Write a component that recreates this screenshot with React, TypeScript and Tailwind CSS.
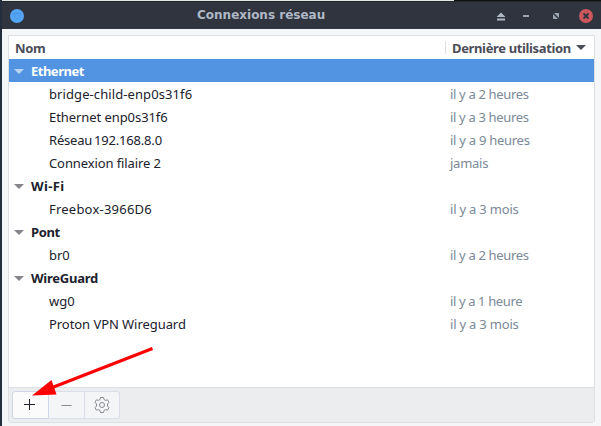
import React from "react";

type Row = { name: string; used?: string; group?: boolean; selected?: boolean; fit: string; usedFit?: string };

const rows: Row[] = [
  { name: "Ethernet", group: true, selected: true, fit: "tracking-[-0.5px]" },
  { name: "bridge-child-enp0s31f6", used: "il y a 2 heures", fit: "tracking-[0.09px]", usedFit: "tracking-[-0.33px]" },
  { name: "Ethernet enp0s31f6", used: "il y a 3 heures", fit: "tracking-[-0.07px]", usedFit: "tracking-[-0.33px]" },
  { name: "Réseau 192.168.8.0", used: "il y a 9 heures", fit: "tracking-[-0.18px] [word-spacing:-1.5px]", usedFit: "tracking-[-0.27px]" },
  { name: "Connexion filaire 2", used: "jamais", fit: "tracking-[-0.1px]", usedFit: "tracking-[-0.25px]" },
  { name: "Wi-Fi", group: true, fit: "tracking-[0.4px]" },
  { name: "Freebox-3966D6", used: "il y a 3 mois", fit: "tracking-[0.22px]", usedFit: "tracking-[-0.2px]" },
  { name: "Pont", group: true, fit: "tracking-[-0.4px]" },
  { name: "br0", used: "il y a 2 heures", fit: "tracking-normal", usedFit: "tracking-[-0.33px]" },
  { name: "WireGuard", group: true, fit: "tracking-[-0.25px]" },
  { name: "wg0", used: "il y a 1 heure", fit: "tracking-normal", usedFit: "tracking-[-0.38px]" },
  { name: "Proton VPN Wireguard", used: "il y a 3 mois", fit: "tracking-[-0.06px]", usedFit: "tracking-[-0.2px]" },
];

function TitleBar() {
  return (
    <header className="flex h-[28px] shrink-0 items-center border-t border-[#23282f] bg-[#2f343f]">
      <svg className="ml-[8px]" width="14" height="14" viewBox="0 0 14 14">
        <circle cx="7" cy="7" r="7" fill="#55a5f5" />
        <path d="M2.5 4.5h9L7 11z M4.5 7.5L7 3l2.5 4.5" fill="none" stroke="#4696e8" strokeWidth="0.7" />
      </svg>
      <h1 className="ml-[173px] pb-[2px] font-['DejaVu_Sans',sans-serif] text-[12px] leading-[16px] font-bold text-[#afb8c5]">Connexions réseau</h1>
      <svg className="ml-auto" width="105" height="14" viewBox="0 0 105 14">
        <path d="M0.500 8L5 3.500 9.500 8z M1 9.500h8v2H1z" fill="#afb8c5" />
        <path d="M27 6h6v2h-6z" fill="#afb8c5" opacity="0.85" />
        <path d="M58 4h5v5z M57 5v5h5z" fill="#afb8c5" opacity="0.85" />
        <path d="M57 4l6 6" stroke="#2f343f" strokeWidth="1" />
        <circle cx="90" cy="7" r="7" fill="#cc575d" />
        <path d="M87.500 4.500l5 5m0-5l-5 5" stroke="#2f343f" strokeWidth="1.8" />
      </svg>
    </header>
  );
}

function Triangle({ className }: { className: string }) {
  return (
    <svg className={className} width="10" height="5" viewBox="0 0 10 5" fill="currentColor">
      <path d="M0 0h10L5 5z" />
    </svg>
  );
}

function ListRow({ row }: { row: Row }) {
  return (
    <div className={`flex h-[23px] items-center ${row.selected ? "bg-[#5294e2] text-white" : "text-[#20212d]"}`}>
      {row.group ? (
        <div className="flex items-center pl-[5px]">
          <Triangle className={row.selected ? "mt-[2px] text-[#b9d5f5]" : "mt-[2px] text-[#85868b]"} />
          <span className={`ml-[7px] font-bold ${row.fit}`}>{row.name}</span>
        </div>
      ) : (
        <>
          <span className={`w-[441px] pl-[40px] ${row.fit}`}>{row.name}</span>
          <span className={`text-[#7b8998] ${row.usedFit}`}>{row.used}</span>
        </>
      )}
    </div>
  );
}

export default function App() {
  return (
    <div className="flex h-[426px] w-[601px] flex-col overflow-hidden border-l-2 border-[#242d3b] bg-[#f5f6f7] font-['Noto_Sans',sans-serif] text-[13px] leading-[18px] whitespace-nowrap">
      <div className="flex h-px shrink-0 bg-[#dfe5e0]">
        <div className="ml-auto w-[147px] bg-[#111]" />
      </div>
      <TitleBar />
      <main className="relative mx-[6px] mt-[6px] flex h-[388px] flex-col overflow-hidden rounded-b-[3px] border border-[#dcdfe3] bg-white">
        <div className="flex h-[23px] shrink-0 items-center font-bold text-[#4b4d58]">
          <span className="w-[436px] shrink-0 pl-[6px] tracking-[-0.3px]">Nom</span>
          <span className="h-[13px] w-px shrink-0 bg-[#dcdfe3]" />
          <span className="ml-[6px] tracking-[-0.36px]">Dernière utilisation</span>
          <Triangle className="mr-[8px] ml-auto shrink-0 text-[#4b4d58]" />
        </div>
        <div className="grow">{rows.map((r) => <ListRow key={r.name} row={r} />)}</div>
        <footer className="flex h-[35px] shrink-0 border-t border-[#dcdfe3] bg-[#ebedef] pt-[3px] pl-[3px]">
          <button className="flex h-[28px] w-[37px] items-center justify-center rounded-l-[3px] border border-[#cfd6e6] bg-[#fbfbfc] pr-[2px] pb-px text-[#20212d]">
            <svg width="11" height="11" viewBox="0 0 11 11" stroke="currentColor"><path d="M0 5.500h11M5.500 0v11" /></svg>
          </button>
          <button className="flex h-[28px] w-[36px] items-center justify-center border-y border-r border-[#d9deea] bg-[#f4f5f7] text-[#88898f]">
            <svg width="11" height="11" viewBox="0 0 11 11" stroke="currentColor"><path d="M0.500 5.500h10" /></svg>
          </button>
          <button className="flex h-[28px] w-[35px] items-center justify-center rounded-r-[3px] border-y border-r border-[#d9deea] bg-[#f4f5f7] text-[#88898f]">
            <svg width="16" height="16" viewBox="0 0 16 16" fill="none" stroke="currentColor" strokeLinejoin="round">
              <path d="M6.500.500h3l.5 2 1.500.9 2-.6 1.500 2.500L13.500 7v2l1.500 1.700-1.500 2.500-2-.6-1.500.9-.5 2h-3l-.5-2-1.500-.9-2 .6L1 10.700 2.500 9V7L1 5.300l1.500-2.500 2 .6L6 2.500z" />
              <circle cx="8" cy="8" r="2.500" />
            </svg>
          </button>
        </footer>
        <svg className="pointer-events-none absolute top-[310px] left-[22px]" width="124" height="52" viewBox="0 0 124 52">
          <path d="M121.500 2.500L20 42" stroke="#ff0000" strokeWidth="3" />
          <path d="M1 49.500L20.500 34l5 14.500z" fill="#ff0000" />
        </svg>
      </main>
    </div>
  );
}
